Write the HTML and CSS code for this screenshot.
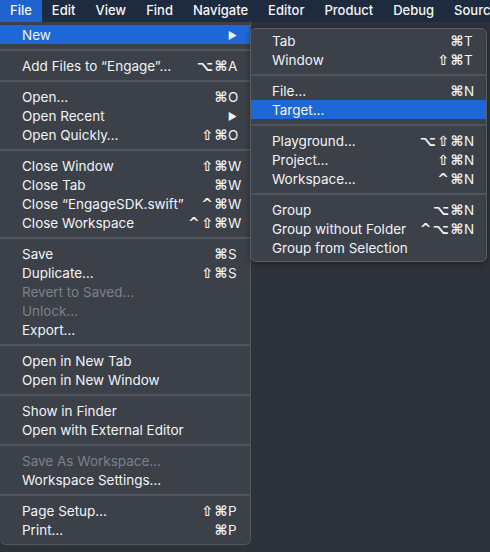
FILE: index.html
```html
<!DOCTYPE html>
<html>
<head>
<meta charset="utf-8">
<link rel="stylesheet" href="styles.css">
</head>
<body>
<div class="menubar">
  <span class="mb-item active">File</span>
  <span class="mb-item">Edit</span>
  <span class="mb-item">View</span>
  <span class="mb-item">Find</span>
  <span class="mb-item">Navigate</span>
  <span class="mb-item">Editor</span>
  <span class="mb-item">Product</span>
  <span class="mb-item">Debug</span>
  <span class="mb-item">Source</span>
</div>
<div class="stage">
  <div class="menu main-menu">
    <div class="row hl"><span class="label">New</span><span class="arrow">▶</span></div>
    <div class="sep"></div>
    <div class="row"><span class="label">Add Files to “Engage”…</span><span class="mods">⌥⌘</span><span class="key">A</span></div>
    <div class="sep"></div>
    <div class="row"><span class="label">Open…</span><span class="mods">⌘</span><span class="key">O</span></div>
    <div class="row"><span class="label">Open Recent</span><span class="arrow">▶</span></div>
    <div class="row"><span class="label">Open Quickly…</span><span class="mods">⇧⌘</span><span class="key">O</span></div>
    <div class="sep"></div>
    <div class="row"><span class="label">Close Window</span><span class="mods">⇧⌘</span><span class="key">W</span></div>
    <div class="row"><span class="label">Close Tab</span><span class="mods">⌘</span><span class="key">W</span></div>
    <div class="row"><span class="label">Close “EngageSDK.swift”</span><span class="mods">^⌘</span><span class="key">W</span></div>
    <div class="row"><span class="label">Close Workspace</span><span class="mods">^⇧⌘</span><span class="key">W</span></div>
    <div class="sep"></div>
    <div class="row"><span class="label">Save</span><span class="mods">⌘</span><span class="key">S</span></div>
    <div class="row"><span class="label">Duplicate…</span><span class="mods">⇧⌘</span><span class="key">S</span></div>
    <div class="row dis"><span class="label">Revert to Saved…</span></div>
    <div class="row dis"><span class="label">Unlock…</span></div>
    <div class="row"><span class="label">Export…</span></div>
    <div class="sep"></div>
    <div class="row"><span class="label">Open in New Tab</span></div>
    <div class="row"><span class="label">Open in New Window</span></div>
    <div class="sep"></div>
    <div class="row"><span class="label">Show in Finder</span></div>
    <div class="row"><span class="label">Open with External Editor</span></div>
    <div class="sep"></div>
    <div class="row dis"><span class="label">Save As Workspace…</span></div>
    <div class="row"><span class="label">Workspace Settings…</span></div>
    <div class="sep"></div>
    <div class="row"><span class="label">Page Setup…</span><span class="mods">⇧⌘</span><span class="key">P</span></div>
    <div class="row"><span class="label">Print…</span><span class="mods">⌘</span><span class="key">P</span></div>
  </div>
  <div class="menu sub-menu">
    <div class="row"><span class="label">Tab</span><span class="mods">⌘</span><span class="key">T</span></div>
    <div class="row"><span class="label">Window</span><span class="mods">⇧⌘</span><span class="key">T</span></div>
    <div class="sep"></div>
    <div class="row"><span class="label">File…</span><span class="mods">⌘</span><span class="key">N</span></div>
    <div class="row hl"><span class="label">Target…</span></div>
    <div class="sep"></div>
    <div class="row"><span class="label">Playground…</span><span class="mods">⌥⇧⌘</span><span class="key">N</span></div>
    <div class="row"><span class="label">Project…</span><span class="mods">⇧⌘</span><span class="key">N</span></div>
    <div class="row"><span class="label">Workspace…</span><span class="mods">^⌘</span><span class="key">N</span></div>
    <div class="sep"></div>
    <div class="row"><span class="label">Group</span><span class="mods">⌥⌘</span><span class="key">N</span></div>
    <div class="row"><span class="label">Group without Folder</span><span class="mods">^⌥⌘</span><span class="key">N</span></div>
    <div class="row"><span class="label">Group from Selection</span></div>
  </div>
</div>
</body>
</html>
```

FILE: styles.css
```css
html, body {
  margin: 0;
  padding: 0;
}
body {
  width: 490px;
  height: 552px;
  overflow: hidden;
  background: #2e323a;
  font-family: "Inter", "Liberation Sans", "DejaVu Sans", sans-serif;
  color: #f2f3f5;
}
.menubar {
  height: 22px;
  background: #1e2a3e;
  display: flex;
  align-items: center;
  white-space: nowrap;
  font-size: 13px;
  font-weight: 500;
  overflow: hidden;
}
.mb-item {
  height: 22px;
  line-height: 21px;
  padding: 0 10px;
  color: #f5f6f8;
}
.mb-item.active {
  background: #1f63cf;
}
.stage {
  position: relative;
  height: 530px;
}
.menu {
  position: absolute;
  background: #3b4049;
  box-sizing: border-box;
  font-size: 13.5px;
}
.main-menu {
  left: 0;
  top: 0;
  width: 251px;
  padding: 3px 0 5px;
  border-right: 1px solid #53575e;
  border-bottom: 1px solid #53575e;
  border-radius: 0 0 6px 6px;
}
.sub-menu {
  left: 250px;
  top: 6px;
  width: 237px;
  border: 1px solid #5a5e66;
  border-radius: 6px;
  padding: 2px 0 4px;
  box-shadow: 0 2px 6px rgba(0,0,0,0.35);
}
.row {
  height: 19px;
  display: flex;
  align-items: center;
  padding: 0 9px 0 22px;
  white-space: nowrap;
}
.sub-menu .row {
  padding-left: 21px;
}
.row.hl {
  background: #1d68d6;
}
.row.dis {
  color: #7d8189;
}
.label {
  flex: 1;
}
.mods {
  font-family: "DejaVu Sans", sans-serif;
  font-size: 14px;
  font-weight: bold;
  letter-spacing: 1.5px;
  margin-right: -1px;
}
.key {
  width: 13px;
}
.arrow {
  font-size: 10px;
  padding-right: 4px;
}
.sep {
  height: 2px;
  margin: 5px 0;
  background: #50555d;
}
```
